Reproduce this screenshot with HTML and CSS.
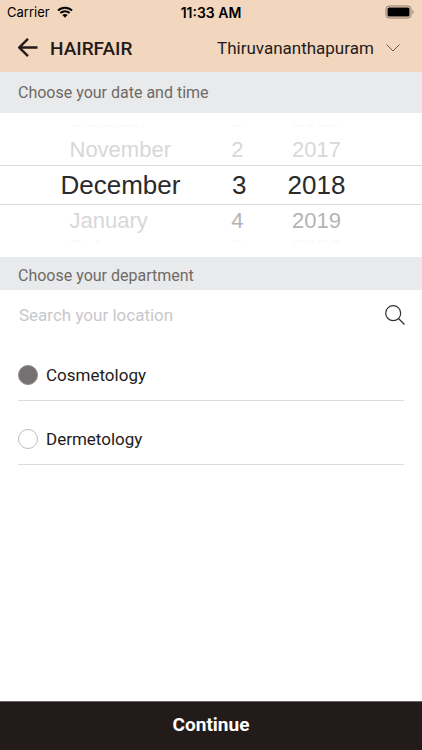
FILE: index.html
```html
<!DOCTYPE html>
<html lang="en">

<head>
    <meta charset="UTF-8">
    <meta name="viewport" content="width=device-width, initial-scale=1.0">
    <title>Hairfair</title>
    <link rel="stylesheet" href="styles.css">
</head>

<body>
    <header class="top">
        <div class="status-bar">
            <div class="carrier">
                <span>Carrier</span>
                <svg width="16" height="12" viewBox="0 0 16 12" aria-hidden="true">
                    <path d="M1 4.5a10 10 0 0 1 14 0M3.4 7a6.6 6.6 0 0 1 9.2 0" fill="none" stroke="#000" stroke-width="2"/>
                    <path d="M5.4 9.1a3.8 3.8 0 0 1 5.2 0L8 11.8z"/>
                </svg>
            </div>
            <div class="time">11:33 AM</div>
            <div class="battery">
                <svg width="30" height="14" viewBox="0 0 30 14" aria-hidden="true">
                    <rect x="1" y="1" width="25" height="12" rx="3" fill="none" stroke="#8f7d6f"/>
                    <rect x="2.5" y="2.5" width="22" height="9" rx="1.5"/>
                    <path d="M27.5 5v4c1.5-.6 1.5-3.4 0-4z" fill="#8f7d6f"/>
                </svg>
            </div>
        </div>
        <div class="nav">
            <button class="back" type="button" aria-label="Back">
                <svg width="20" height="20" viewBox="0 0 20 20" aria-hidden="true">
                    <path d="M19.5 9.5H1.5M10 .8L1.3 9.5l8.7 8.7" fill="none" stroke="#231b1a" stroke-width="2.4"/>
                </svg>
            </button>
            <h1>HAIRFAIR</h1>
            <div class="location">
                <select aria-label="Location">
                    <option>Thiruvananthapuram</option>
                </select>
                <svg width="14" height="8" viewBox="0 0 14 8" aria-hidden="true">
                    <path d="M.5.5L7 7 13.5.5" fill="none" stroke="#6b5a50"/>
                </svg>
            </div>
        </div>
    </header>

    <main>
        <h2 class="section-title date-title">Choose your date and time</h2>
        <div class="picker">
            <div class="picker-row edge edge-top">
                <span class="month">October</span>
                <span class="day">1</span>
                <span class="year">2016</span>
            </div>
            <div class="picker-row near previous">
                <span class="month">November</span>
                <span class="day">2</span>
                <span class="year">2017</span>
            </div>
            <div class="picker-row selected">
                <span class="month">December</span>
                <span class="day">3</span>
                <span class="year">2018</span>
            </div>
            <div class="picker-row near next">
                <span class="month">January</span>
                <span class="day">4</span>
                <span class="year">2019</span>
            </div>
            <div class="picker-row edge edge-bottom">
                <span class="month">February</span>
                <span class="day">5</span>
                <span class="year">2020</span>
            </div>
        </div>

        <h2 class="section-title">Choose your department</h2>
        <form class="search">
            <input type="text" placeholder="Search your location" aria-label="Search your location">
            <button type="submit" aria-label="Search">
                <svg width="20" height="20" viewBox="0 0 20 20" aria-hidden="true">
                    <circle cx="8.2" cy="8.2" r="7.5" fill="none" stroke="#333" stroke-width="1.2"/>
                    <path d="M13.5 13.5l6 6" stroke="#333" stroke-width="1.3"/>
                </svg>
            </button>
        </form>

        <div class="departments">
            <label class="department">
                <input type="radio" name="department" checked>
                <span>Cosmetology</span>
            </label>
            <label class="department">
                <input type="radio" name="department">
                <span>Dermetology</span>
            </label>
        </div>
    </main>

    <button class="continue" type="button">Continue</button>
</body>

</html>
```
FILE: styles.css
```css
* {
    box-sizing: border-box;
}

body {
    font-family: Roboto, sans-serif;
    font-size: 17px;
    margin: 0;
    min-height: 100vh;
    display: flex;
    flex-direction: column;
    background-color: #fff;
    color: #231b1a;
}

button,
input,
select {
    font: inherit;
    color: inherit;
    border: none;
    background: none;
    padding: 0;
    margin: 0;
    border-radius: 0;
}

button {
    cursor: pointer;
}

svg {
    display: block;
    flex-shrink: 0;
}

h1,
h2 {
    margin: 0;
}

/* Header */
.top {
    background-color: #f2d6be;
}

.status-bar {
    display: grid;
    grid-template-columns: 1fr auto 1fr;
    align-items: center;
    height: 24px;
    padding: 0 7px;
    font-family: Inter, sans-serif;
    font-size: 13px;
    color: #000;
}

.carrier {
    display: flex;
    align-items: center;
    gap: 7px;
}

.time {
    font-size: 14px;
    font-weight: 600;
}

.battery {
    justify-self: end;
}

.nav {
    display: flex;
    align-items: center;
    height: 48px;
    padding: 0 22px 0 18px;
}

.nav h1 {
    margin-left: 12px;
    font-size: 19px;
    font-weight: 500;
}

.location {
    display: flex;
    align-items: center;
    gap: 12px;
    margin-left: auto;
}

.location select {
    appearance: none;
}

/* Section headings */
.section-title {
    height: 33px;
    padding: 0 18px;
    background-color: #e9eaeb;
    color: #6f6a67;
    font-size: 16px;
    font-weight: 400;
    line-height: 37px;
}

.date-title {
    height: 41px;
    line-height: 41px;
}

/* Date picker */
.picker {
    display: flex;
    flex-direction: column;
    height: 144px;
    padding: 12px 0;
    font-family: "Liberation Sans", Arial, sans-serif;
    font-size: 22px;
}

.picker-row {
    display: grid;
    grid-template-columns: 120px 26px 60px;
    column-gap: 40px;
    justify-content: center;
    align-items: center;
    padding-right: 15px;
}

.day {
    text-align: right;
}

.year {
    text-align: center;
}

.selected {
    height: 40px;
    border-top: 1px solid #dcdcdc;
    border-bottom: 1px solid #dcdcdc;
    color: #2b2b2b;
    font-size: 26px;
}

.near {
    height: 31px;
    color: #b4b4b4;
}

.near .month,
.edge .month {
    padding-left: 9px;
}

.near .day,
.edge .day {
    padding-right: 3px;
}

.previous,
.next .month {
    color: #d8d8d8;
}

/* Only a sliver of the outermost values shows */
.edge {
    height: 3px;
    overflow: hidden;
    color: #fafafa;
    line-height: 16px;
}

.edge-top {
    align-content: end;
    margin-bottom: 6px;
}

.edge-bottom {
    align-content: start;
    margin-top: 4px;
}

/* Search */
.search {
    display: flex;
    align-items: center;
    height: 50px;
    padding: 0 17px 0 19px;
}

.search input {
    flex: 1;
    min-width: 0;
    outline: none;
}

.search input::placeholder {
    color: #c7c8ca;
    opacity: 1;
}

/* Departments */
.departments {
    padding: 1px 18px 0;
}

.department {
    display: flex;
    align-items: center;
    gap: 8px;
    height: 64px;
    padding-top: 12px;
    border-bottom: 1px solid #dcdcdc;
}

.department:first-child {
    height: 60px;
    padding-top: 8px;
}

.department input {
    appearance: none;
    width: 20px;
    height: 20px;
    border: 1px solid #bdbdbd;
    border-radius: 50%;
}

.department input:checked {
    background-color: #747170;
    border-color: #8e8c8b;
}

.continue {
    height: 49px;
    margin-top: auto;
    padding-bottom: 3px;
    border-top: 1px solid #6b6665;
    background-color: #231b1a;
    color: #fff;
    font-size: 19px;
    font-weight: 700;
}
```
